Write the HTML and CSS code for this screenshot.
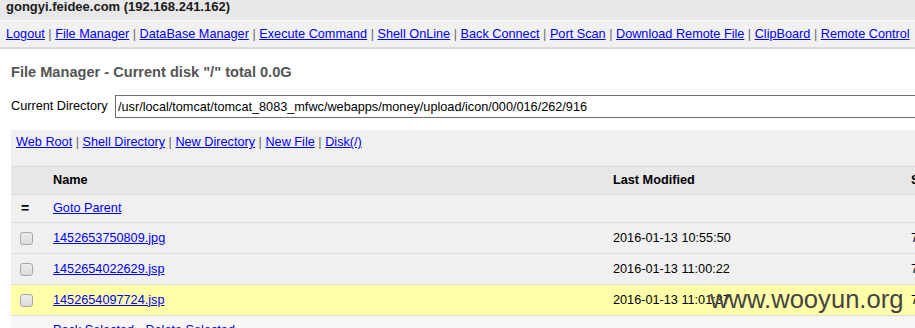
FILE: index.html
```html
<!DOCTYPE html>
<html lang="en">
<head>
<meta charset="utf-8">
<title>File Manager</title>
<link rel="stylesheet" href="styles.css">
</head>
<body>
<div class="titlebar">gongyi.feidee.com (192.168.241.162)</div>
<nav class="nav">
  <a href="#">Logout</a><span class="sep"> | </span><a href="#">File Manager</a><span class="sep"> | </span><a href="#">DataBase Manager</a><span class="sep"> | </span><a href="#">Execute Command</a><span class="sep"> | </span><a href="#">Shell OnLine</a><span class="sep"> | </span><a href="#">Back Connect</a><span class="sep"> | </span><a href="#">Port Scan</a><span class="sep"> | </span><a href="#">Download Remote File</a><span class="sep"> | </span><a href="#">ClipBoard</a><span class="sep"> | </span><a href="#">Remote Control</a>
</nav>
<main class="content">
  <h2 class="heading">File Manager - Current disk "/" total 0.0G</h2>
  <form class="dirform">
    <label class="dirlabel" for="dir">Current Directory</label>
    <input class="dirinput" id="dir" type="text" value="/usr/local/tomcat/tomcat_8083_mfwc/webapps/money/upload/icon/000/016/262/916">
  </form>
  <div class="panel">
    <div class="tools">
      <a href="#">Web Root</a><span class="sep"> | </span><a href="#">Shell Directory</a><span class="sep"> | </span><a href="#">New Directory</a><span class="sep"> | </span><a href="#">New File</a><span class="sep"> | </span><a href="#">Disk(/)</a>
    </div>
    <div class="files">
      <div class="row head">
        <div class="cell"></div>
        <div class="cell">Name</div>
        <div class="cell">Last Modified</div>
        <div class="cell">Size</div>
      </div>
      <div class="row parent">
        <div class="cell eq">=</div>
        <div class="cell"><a href="#">Goto Parent</a></div>
        <div class="cell"></div>
        <div class="cell"></div>
      </div>
      <div class="row file">
        <div class="cell"><span class="check"></span></div>
        <div class="cell"><a href="#">1452653750809.jpg</a></div>
        <div class="cell">2016-01-13 10:55:50</div>
        <div class="cell">7.81 KB</div>
      </div>
      <div class="row file">
        <div class="cell"><span class="check"></span></div>
        <div class="cell"><a href="#">1452654022629.jsp</a></div>
        <div class="cell">2016-01-13 11:00:22</div>
        <div class="cell">7.54 KB</div>
      </div>
      <div class="row file hl">
        <div class="cell"><span class="check"></span></div>
        <div class="cell"><a href="#">1452654097724.jsp</a></div>
        <div class="cell">2016-01-13 11:01:37</div>
        <div class="cell">7.54 KB</div>
      </div>
      <div class="row actions">
        <div class="cell"></div>
        <div class="cell"><a href="#">Pack Selected</a> - <a href="#">Delete Selected</a></div>
        <div class="cell"></div>
        <div class="cell"></div>
      </div>
    </div>
  </div>
</main>
<div class="watermark">www.wooyun.org</div>
</body>
</html>
```
FILE: styles.css
```css
html, body {
  margin: 0;
  padding: 0;
  overflow: hidden;
  background: #ffffff;
}
body {
  font-family: "Liberation Sans", Arial, sans-serif;
  font-size: 12.7px;
  line-height: 15px;
  color: #000;
  width: 915px;
  height: 328px;
  position: relative;
}
a {
  color: #0000ee;
  text-decoration: underline;
}
.sep {
  color: #666;
}
.titlebar {
  height: 20px;
  box-sizing: border-box;
  background: #e8e8e8;
  padding-left: 6px;
  font-weight: bold;
  font-size: 13px;
  line-height: 14px;
  color: #1a1a1a;
  white-space: nowrap;
}
.nav {
  height: 29px;
  box-sizing: border-box;
  background: #f1f1f1;
  border-top: 1px solid #f9f9f9;
  border-bottom: 2px solid #dadada;
  padding: 6px 0 0 6px;
  white-space: nowrap;
}
.content {
  padding-left: 11px;
}
.heading {
  margin: 14px 0 0;
  font-size: 14.6px;
  line-height: 18px;
  font-weight: bold;
  color: #555;
}
.dirform {
  display: flex;
  align-items: center;
  margin: 14px 0 0;
}
.dirlabel {
  width: 104px;
  flex: none;
}
.dirinput {
  flex: none;
  width: 900px;
  height: 23px;
  box-sizing: border-box;
  border: 1px solid #6e6e6e;
  padding: 0 2px;
  font-family: "Liberation Sans", Arial, sans-serif;
  font-size: 12.7px;
  color: #000;
  background: #fff;
  outline: none;
}
.panel {
  margin-top: 12px;
  width: 1100px;
  background: #f0f0f0;
}
.tools {
  height: 36px;
  box-sizing: border-box;
  padding: 5px 5px 0;
  white-space: nowrap;
}
.files {
  display: flex;
  flex-direction: column;
}
.row {
  display: grid;
  grid-template-columns: 42px 560px 298px 200px;
  align-items: center;
  box-sizing: border-box;
  border-bottom: 1px solid #dcdcdc;
  white-space: nowrap;
}
.row.head {
  height: 29px;
  border-top: 1px solid #dcdcdc;
  background: #e7e7e7;
  font-weight: bold;
}
.row.parent {
  height: 28px;
}
.row.file {
  height: 31px;
}
.row.hl {
  background: #ffffaa;
}
.row.actions {
  height: 20px;
  align-items: start;
  padding-top: 7px;
  border-bottom: none;
  background: #f7f7f7;
}
.cell.eq {
  padding-left: 10px;
  font-weight: bold;
  font-size: 14px;
}
.check {
  display: block;
  margin-left: 9px;
  width: 13px;
  height: 13px;
  box-sizing: border-box;
  border: 1px solid #a8a8a8;
  border-radius: 3px;
  background: linear-gradient(#ededed, #dcdcdc);
}
.watermark {
  position: absolute;
  left: 710px;
  top: 287px;
  font-family: "Liberation Sans", Arial, sans-serif;
  font-size: 25.6px;
  line-height: 25px;
  color: #444;
  white-space: nowrap;
}
```
